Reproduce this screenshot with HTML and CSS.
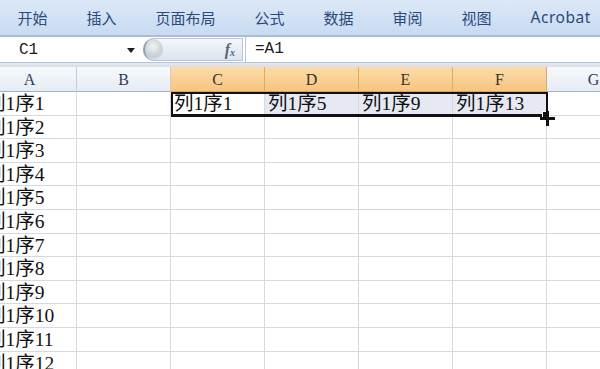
FILE: index.html
```html
<!DOCTYPE html>
<html>
<head>
    <title>Excel</title>
    <meta charset="utf-8">
    <link rel="stylesheet" href="styles.css">
</head>
<body>
    <div class="ribbon">
        <span class="tab">开始</span>
        <span class="tab">插入</span>
        <span class="tab">页面布局</span>
        <span class="tab">公式</span>
        <span class="tab">数据</span>
        <span class="tab">审阅</span>
        <span class="tab">视图</span>
        <span class="tab">Acrobat</span>
    </div>

    <div class="formula-bar">
        <div class="name-box">
            <span>C1</span>
            <span class="arrow"></span>
        </div>
        <div class="fx-pill">
            <span class="knob"></span>
            <span class="fx">f<sub>x</sub></span>
        </div>
        <div class="formula-input">=A1</div>
    </div>
    <div class="band"></div>

    <div class="sheet">
        <div class="col-head">A</div>
        <div class="col-head">B</div>
        <div class="col-head sel">C</div>
        <div class="col-head sel">D</div>
        <div class="col-head sel">E</div>
        <div class="col-head sel">F</div>
        <div class="col-head last">G</div>
    </div>
    <div class="sheet" id="rows"></div>

    <script>
        var rows = document.getElementById("rows");
        var firstRow = ["列1序1", "", "列1序1", "列1序5", "列1序9", "列1序13", ""];
        for (var r = 1; r <= 12; r++) {
            for (var c = 0; c < 7; c++) {
                var cell = document.createElement("div");
                cell.className = "cell";
                if (c == 0) cell.textContent = "列1序" + r;
                if (r == 1 && c > 1) {
                    cell.textContent = firstRow[c];
                    if (c == 2) cell.className += " active";
                    if (c > 2 && c < 6) cell.className += " picked";
                }
                rows.appendChild(cell);
            }
        }
    </script>
    <div class="selection">
        <span class="handle"></span>
        <span class="cross"></span>
    </div>
</body>
</html>
```

FILE: styles.css
```css
body {
    margin: 0;
    width: 600px;
    height: 369px;
    overflow: hidden;
    position: relative;
    background: #fff;
    font-family: "Liberation Serif", "DejaVu Serif", "Noto Sans CJK SC", serif;
}
.ribbon {
    height: 35px;
    display: flex;
    align-items: center;
    margin-left: -2px;
    background: linear-gradient(#dce8f7, #c8dbf2);
    border-bottom: 2px solid #a9bdd8;
    white-space: nowrap;
}
.tab {
    padding: 0 19.5px;
    font-family: "Noto Sans CJK SC", sans-serif;
    font-size: 15px;
    color: #2a4a7e;
    line-height: 35px;
}
.tab:last-child {
    font-family: "Noto Sans", "Noto Sans CJK SC", sans-serif;
    font-size: 15.5px;
    letter-spacing: 0.5px;
}
.formula-bar {
    height: 25px;
    display: flex;
    background: #fff;
    border-bottom: 1px solid #b4c3d7;
    font-family: "Liberation Mono", "DejaVu Sans Mono", monospace;
    font-size: 16px;
    color: #1b1b1b;
}
.name-box {
    width: 143px;
    display: flex;
    align-items: center;
    justify-content: space-between;
    padding: 0 8px 0 19px;
    box-sizing: border-box;
}
.arrow {
    width: 0;
    height: 0;
    border-left: 4px solid transparent;
    border-right: 4px solid transparent;
    border-top: 5px solid #1d1d1d;
    margin-top: 2px;
}
.fx-pill {
    width: 100px;
    height: 23px;
    margin-top: 1px;
    border: 1px solid #b7c5d8;
    border-left: none;
    border-radius: 14px 0 0 14px;
    background: linear-gradient(#f4f7fb, #dbe4f0);
    display: flex;
    align-items: center;
    justify-content: space-between;
    padding-right: 7px;
    box-sizing: border-box;
}
.knob {
    width: 18px;
    height: 21px;
    border-radius: 50%;
    border-left: 2px solid #8c9fb8;
    background: radial-gradient(circle at 45% 35%, #f2f2f2, #c8ced6 60%, #e8ecf2);
}
.fx {
    font-family: "Liberation Serif", "DejaVu Serif", serif;
    font-style: italic;
    font-weight: bold;
    font-size: 16px;
    color: #5b6677;
}
.fx sub {
    font-size: 10px;
    vertical-align: -1px;
}
.formula-input {
    flex: 1;
    border-left: 1px solid #b7c5d8;
    padding-left: 9px;
    line-height: 25px;
    margin-left: 2px;
}
.band {
    height: 4px;
    background: linear-gradient(#e4eaf2, #d6dee9);
}
.sheet {
    display: grid;
    grid-template-columns: repeat(7, 94px);
    margin-left: -17px;
}
#rows {
    grid-auto-rows: 23.6px;
}
.col-head {
    height: 25px;
    line-height: 25px;
    text-align: center;
    font-size: 16px;
    color: #2c3e57;
    background: linear-gradient(#f7f9fc, #e6ecf3);
    border-right: 1px solid #c3cedc;
    border-bottom: 1px solid #9eb0c6;
    box-sizing: border-box;
}
.col-head.sel {
    background: linear-gradient(#fbdcab, #f6c57f);
    border-right-color: #e7a85c;
    border-bottom-color: #e59e45;
    color: #3a3325;
}
.cell {
    border-right: 1px solid #d4d9e2;
    border-bottom: 1px solid #d4d9e2;
    box-sizing: border-box;
    padding: 1px 0 0 3px;
    font-size: 19.5px;
    line-height: 22px;
    color: #111;
    white-space: nowrap;
    overflow: hidden;
}
.cell.picked {
    background: #e6e9f3;
}
.selection {
    position: absolute;
    left: 171px;
    top: 92px;
    width: 377px;
    height: 25px;
    border: 2px solid #111;
    border-bottom-width: 3px;
    box-sizing: border-box;
}
.handle {
    position: absolute;
    right: -4px;
    bottom: -5px;
    width: 6px;
    height: 6px;
    background: #111;
    border: 1px solid #fff;
}
.cross {
    position: absolute;
    right: -9px;
    bottom: -12px;
    width: 15px;
    height: 15px;
    background:
        linear-gradient(#111, #111) center / 3px 15px no-repeat,
        linear-gradient(#111, #111) center / 15px 3px no-repeat;
}
```
